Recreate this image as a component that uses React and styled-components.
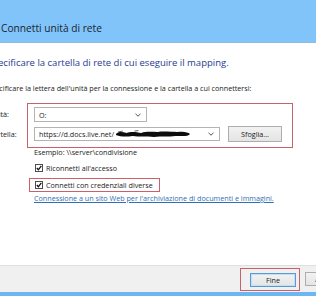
import React from "react";
import styled, { createGlobalStyle } from "styled-components";

const Global = createGlobalStyle`
  html, body { margin: 0; padding: 0; background: #ffffff; overflow: hidden; }
  body { width: 316px; height: 296px; font-family: "Open Sans", "Liberation Sans", sans-serif; }
`;

const Window = styled.div`
  width: 316px;
  height: 296px;
  display: flex;
  flex-direction: column;
  overflow: hidden;
  background: #ffffff;
`;

const TitleBar = styled.div`
  height: 43px;
  flex: none;
  background: #80c4fa;
  border-bottom: 1px solid #8fbde0;
  display: flex;
  align-items: flex-end;
  padding: 0 0 7px 1px;
  box-sizing: border-box;
  font-size: 10.2px;
  color: #1b2430;
`;

const Body = styled.div`
  flex: 1;
  display: flex;
  flex-direction: column;
  margin-left: -13px;
  padding-top: 13px;
  color: #1a1a1a;
  font-size: 7.2px;
`;

const Heading = styled.div`
  font-size: 9.5px;
  color: #1f3b8f;
  white-space: nowrap;
  line-height: 14px;
`;

const Instruction = styled.div`
  margin-top: 13px;
  white-space: nowrap;
  line-height: 10px;
`;

const FormGrid = styled.div`
  margin-top: 10px;
  display: grid;
  grid-template-columns: 40px 266px;
`;

const Labels = styled.div`
  display: flex;
  flex-direction: column;
  padding: 4px 0 0 2px;
  gap: 5px;
  line-height: 15px;
  white-space: nowrap;
`;

const Highlight = styled.div`
  border: 1px solid #c9606a;
  box-sizing: border-box;
  display: ${(p) => (p.$inline ? "inline-flex" : "flex")};
  flex-direction: column;
  gap: ${(p) => p.$gap || 0}px;
  padding: ${(p) => p.$pad};
`;

const Row = styled.div`
  display: flex;
  align-items: center;
  gap: 8px;
`;

const Select = styled.div`
  width: ${(p) => p.$w}px;
  height: ${(p) => p.$h}px;
  box-sizing: border-box;
  border: 1px solid #b3b3b3;
  background: #ffffff;
  display: flex;
  align-items: center;
  padding: 0 5px 0 4px;
  font-size: 7.2px;
  color: #1a1a1a;
  white-space: nowrap;
  overflow: hidden;
`;

const SelectText = styled.span`
  flex: 1;
  display: flex;
  align-items: center;
  overflow: hidden;
`;

const Chevron = () => (
  <svg width="6" height="4" viewBox="0 0 6 4" style={{ flex: "none" }}>
    <path d="M0.5 0.8 L3 3.2 L5.5 0.8" fill="none" stroke="#555" strokeWidth="1" />
  </svg>
);

const Scribble = () => (
  <svg width="76" height="8" viewBox="0 0 78 8" style={{ marginLeft: 1, flex: "none" }}>
    <path
      d="M1 4 C4 1 8 2 12 3 C16 1 22 2 27 3 C32 1 38 2 44 2 C50 1 58 2 64 2 C70 1 75 2 77 4 C75 7 68 6 62 6 C55 7 48 6 40 7 C32 6 25 7 18 6 C12 7 6 7 1 5 Z"
      fill="#0d0d0d"
    />
    <path d="M3 2 L8 1 M20 1 L24 0.5" stroke="#333" strokeWidth="0.8" />
  </svg>
);

const Button = styled.div`
  width: ${(p) => p.$w}px;
  height: ${(p) => p.$h}px;
  box-sizing: border-box;
  border: 1px solid ${(p) => (p.$default ? "#5a9ad0" : "#adadad")};
  box-shadow: ${(p) => (p.$default ? "inset 0 0 0 1px #bfe0f7" : "none")};
  background: linear-gradient(#f2f2f2, #e4e4e4);
  display: flex;
  align-items: center;
  justify-content: center;
  font-size: 7.2px;
  color: #1a1a1a;
  flex: none;
`;

const Options = styled.div`
  padding-left: 47px;
  display: flex;
  flex-direction: column;
  align-items: flex-start;
`;

const Example = styled.div`
  line-height: 8px;
  white-space: nowrap;
`;

const Check = styled.label`
  display: flex;
  align-items: center;
  gap: 3px;
  line-height: 10px;
  white-space: nowrap;
`;

const Box = styled.span`
  width: 8px;
  height: 8px;
  box-sizing: border-box;
  border: 1px solid #4d4d4d;
  background: #fff;
  display: inline-flex;
  align-items: center;
  justify-content: center;
`;

const Tick = () => (
  <svg width="6" height="6" viewBox="0 0 6 6">
    <path d="M0.8 3 L2.4 4.8 L5.3 0.9" fill="none" stroke="#111" strokeWidth="1.3" />
  </svg>
);

const Link = styled.a`
  margin-top: 1px;
  color: #2f6fb5;
  text-decoration: underline;
  white-space: nowrap;
  line-height: 10px;
`;

const Footer = styled.div`
  height: 27px;
  flex: none;
  box-sizing: border-box;
  background: #f0f0f0;
  border-top: 1px solid #dfdfdf;
  display: flex;
  align-items: center;
  padding-left: 240px;
  gap: 5px;
  overflow: hidden;
`;

const BottomEdge = styled.div`
  height: 4px;
  flex: none;
  background: #6cb6f2;
`;

export default function App() {
  return (
    <>
      <Global />
      <Window>
        <TitleBar>Connetti unità di rete</TitleBar>
        <Body>
          <Heading>Specificare la cartella di rete di cui eseguire il mapping.</Heading>
          <Instruction>
            Specificare la lettera dell'unità per la connessione e la cartella a cui connettersi:
          </Instruction>
          <FormGrid>
            <Labels>
              <span>Unità:</span>
              <span>Cartella:</span>
            </Labels>
            <Highlight $pad="3px 0 5px 6px" $gap={4}>
              <Select $w={113} $h={15}>
                <SelectText>O:</SelectText>
                <Chevron />
              </Select>
              <Row>
                <Select $w={186} $h={14}>
                  <SelectText>
                    https://d.docs.live.net/
                    <Scribble />
                  </SelectText>
                  <Chevron />
                </Select>
                <Button $w={54} $h={16}>Sfoglia...</Button>
              </Row>
            </Highlight>
          </FormGrid>
          <Options>
            <Example>Esempio: \\server\condivisione</Example>
            <Check style={{ marginTop: 7, marginLeft: 1 }}>
              <Box><Tick /></Box>
              Riconnetti all'accesso
            </Check>
            <Highlight $pad="1px 6px 1px 5px" style={{ marginTop: 5, marginLeft: -5 }}>
              <Check>
                <Box><Tick /></Box>
                Connetti con credenziali diverse
              </Check>
            </Highlight>
            <Link>Connessione a un sito Web per l'archiviazione di documenti e immagini.</Link>
          </Options>
        </Body>
        <Footer>
          <Highlight $pad="4px 3px 3px 9px" $inline>
            <Button $w={46} $h={14} $default>Fine</Button>
          </Highlight>
          <Button $w={46} $h={14}>Annulla</Button>
        </Footer>
        <BottomEdge />
      </Window>
    </>
  );
}
